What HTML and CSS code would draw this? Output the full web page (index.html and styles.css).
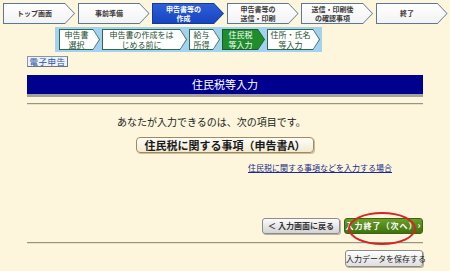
FILE: index.html
```html
<!DOCTYPE html>
<html lang="ja">
<head>
<meta charset="utf-8">
<title>住民税等入力</title>
<link rel="stylesheet" href="styles.css">
</head>
<body>
<nav class="steps">
  <div class="step"><div class="step-in"><span>トップ画面</span></div></div>
  <div class="step"><div class="step-in"><span>事前準備</span></div></div>
  <div class="step active"><div class="step-in"><span>申告書等の<br>作成</span></div></div>
  <div class="step"><div class="step-in"><span>申告書等の<br>送信・印刷</span></div></div>
  <div class="step"><div class="step-in"><span>送信・印刷後<br>の確認事項</span></div></div>
  <div class="step"><div class="step-in"><span>終了</span></div></div>
</nav>
<div class="substeps">
  <div class="sub w41"><div class="sub-in"><span>申告書<br>選択</span></div></div>
  <div class="sub w85"><div class="sub-in"><span>申告書の作成をは<br>じめる前に</span></div></div>
  <div class="sub w31"><div class="sub-in"><span>給与<br>所得</span></div></div>
  <div class="sub w43 active"><div class="sub-in"><span>住民税<br>等入力</span></div></div>
  <div class="sub w53"><div class="sub-in"><span>住所・氏名<br>等入力</span></div></div>
</div>
<main class="content">
  <div class="logo">電子申告</div>
  <h1 class="title">住民税等入力</h1>
  <div class="rule"></div>
  <p class="lead">あなたが入力できるのは、次の項目です。</p>
  <div class="item-row"><span class="item-btn">住民税に関する事項（申告書A）</span></div>
  <div class="link-row"><a class="link" href="#">住民税に関する事項などを入力する場合</a></div>
  <div class="actions">
    <button class="btn back">＜ 入力画面に戻る</button>
    <button class="btn next">入力終了（次へ）<span class="arr">›</span><span class="circle"></span></button>
  </div>
  <div class="rule rule2"></div>
  <div class="save-row"><button class="btn save">入力データを保存する</button></div>
</main>
</body>
</html>
```

FILE: styles.css
```css
html, body {
  margin: 0;
  padding: 0;
  background: #fdf6dc;
  font-family: "Noto Sans CJK JP", "Noto Sans", sans-serif;
  color: #222;
}
body {
  padding-top: 3px;
  width: 450px;
  height: 271px;
  overflow: hidden;
}

/* main steps */
.steps {
  display: flex;
  gap: 2.5px;
  padding-left: 3px;
}
.step {
  width: 72px;
  height: 21px;
  padding: 1px;
  box-sizing: border-box;
  background: #5a7897;
  clip-path: polygon(0 0, calc(100% - 10px) 0, 100% 50%, calc(100% - 10px) 100%, 0 100%);
}
.step-in {
  height: 100%;
  background: linear-gradient(#ffffff, #f3f3f3);
  clip-path: polygon(0 0, calc(100% - 9px) 0, 100% 50%, calc(100% - 9px) 100%, 0 100%);
  display: flex;
  align-items: center;
  justify-content: center;
  padding-right: 9px;
  font-size: 7px;
  line-height: 9px;
  font-weight: bold;
  color: #3a3a3a;
  text-align: center;
}
.step.active {
  background: #123a9a;
}
.step.active .step-in {
  background: linear-gradient(#2d5fd8, #1844c0);
  color: #fff;
}

/* sub steps */
.substeps {
  margin: 3px 0 0 55px;
  width: 267px;
  height: 25px;
  box-sizing: border-box;
  background: #a3d2f1;
  display: flex;
  align-items: center;
  gap: 2px;
  padding-left: 4px;
}
.sub {
  height: 21px;
  padding: 1px;
  box-sizing: border-box;
  background: #2f6a48;
  clip-path: polygon(0 0, calc(100% - 7px) 0, 100% 50%, calc(100% - 7px) 100%, 0 100%);
}
.sub-in {
  height: 100%;
  background: #fff;
  clip-path: polygon(0 0, calc(100% - 6px) 0, 100% 50%, calc(100% - 6px) 100%, 0 100%);
  display: flex;
  align-items: center;
  justify-content: center;
  padding-right: 6px;
  font-size: 8px;
  line-height: 9.5px;
  color: #1e4e34;
  text-align: center;
}
.sub.active { background: #14601f; }
.sub.active .sub-in { background: #1f8d2c; color: #fff; }
.w41 { width: 41px; }
.w85 { width: 85px; }
.w31 { width: 31px; }
.w43 { width: 43px; }
.w53 { width: 53px; }

/* content */
.content {
  margin: 0 27px;
  width: 396px;
}
.logo {
  margin-top: 4px;
  width: 41px;
  height: 11px;
  box-sizing: border-box;
  border: 1px solid #8a96a8;
  border-right-color: #6a7484;
  border-bottom-color: #6a7484;
  background: #eef2f8;
  color: #2a52a6;
  font-size: 8.5px;
  line-height: 9px;
  text-align: center;
  letter-spacing: 0.5px;
}
.title {
  margin: 8px 0 0;
  height: 19px;
  background: #00008e;
  border-bottom: 3px solid #a4a2a0;
  color: #fff;
  font-size: 11px;
  font-weight: normal;
  line-height: 19px;
  text-align: center;
}
.rule {
  margin-top: 6px;
  height: 1px;
  background: #9c9480;
  border-bottom: 1px solid #e8e0c8;
}
.lead {
  margin: 11px 0 0;
  padding-left: 90px;
  font-size: 10px;
  line-height: 12px;
  color: #222;
}
.item-row {
  margin-top: 9px;
  display: flex;
  justify-content: center;
}
.item-btn {
  display: block;
  height: 16px;
  box-sizing: border-box;
  padding: 0 7px;
  border: 1px solid #a08a62;
  border-radius: 4px;
  background: linear-gradient(#fffef8, #f1ead2);
  box-shadow: 1px 1px 0 #cdbd96;
  font-size: 11px;
  font-weight: bold;
  line-height: 14px;
  color: #1a1a1a;
}
.link-row {
  margin-top: 10px;
  display: flex;
  justify-content: flex-end;
  padding-right: 31px;
}
.link {
  font-size: 8px;
  line-height: 10px;
  color: #1a2a8a;
  text-decoration: underline;
}
.actions {
  margin-top: 45px;
  display: flex;
  justify-content: flex-end;
  gap: 4px;
}
.btn {
  height: 16px;
  box-sizing: border-box;
  border-radius: 3px;
  font-family: "Noto Sans CJK JP", "Noto Sans", sans-serif;
  font-size: 8px;
  font-weight: bold;
  line-height: 14px;
  padding: 0;
  margin: 0;
  position: relative;
  white-space: nowrap;
}
.back {
  width: 78px;
  border: 1px solid #8c8c8c;
  background: linear-gradient(#fbfbfb, #d4d4d4);
  color: #333;
  box-shadow: 1px 1px 0 #b8b2a0;
}
.next {
  width: 79px;
  border: 1px solid #3c6410;
  background: linear-gradient(#6aa02a, #3f710e);
  color: #fff;
  letter-spacing: 1px;
}
.arr {
  font-size: 9px;
}
.circle {
  position: absolute;
  left: 3px;
  top: -7px;
  width: 64px;
  height: 29px;
  border: 2px solid #d42424;
  border-radius: 50%;
}
.rule2 {
  margin-top: 8px;
}
.save-row {
  margin-top: 6px;
  display: flex;
  justify-content: flex-end;
}
.save {
  width: 78px;
  height: 17px;
  border: 1px solid #8c8c8c;
  background: linear-gradient(#ffffff, #dedede);
  color: #222;
  box-shadow: 1px 1px 0 #b8b2a0;
  font-weight: normal;
  line-height: 15px;
}
```
